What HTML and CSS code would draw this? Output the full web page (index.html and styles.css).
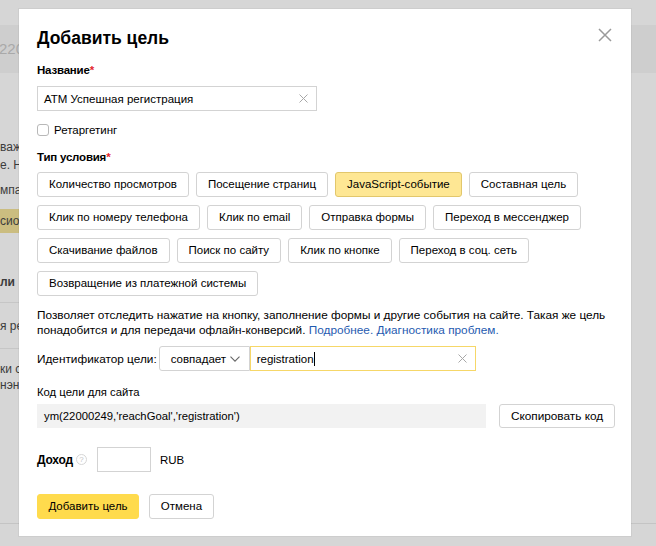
FILE: index.html
```html
<!DOCTYPE html>
<html lang="ru">
<head>
<meta charset="utf-8">
<title>Добавить цель</title>
<link rel="stylesheet" href="styles.css">
</head>
<body>
<div class="backdrop">
  <div class="bd-top"></div>
  <div class="bd-band"><span class="bd-num">220</span></div>
  <div class="bd-left">
    <div class="bd-text">
      <p class="bd-line">важ</p>
      <p class="bd-line">е. Н</p>
      <p class="bd-line bd-l3">мпа</p>
    </div>
    <div class="bd-chip">сион</div>
    <div class="bd-head">ли</div>
    <div class="bd-row">я ре</div>
    <div class="bd-row2"><p>ки с</p><p>нэнт</p></div>
  </div>
  <div class="bd-foot"></div>
</div>

<div class="modal">
  <button class="close" aria-label="Закрыть">
    <svg width="14" height="14" viewBox="0 0 14 14"><path d="M1 1L13 13M13 1L1 13" stroke="#9a9a9a" stroke-width="1.5" fill="none"/></svg>
  </button>
  <h1 class="title">Добавить цель</h1>

  <div class="label">Название<span class="req">*</span></div>
  <div class="input name-input">
    <span class="value">АТМ Успешная регистрация</span>
    <svg class="clear" width="9" height="9" viewBox="0 0 9 9"><path d="M0.5 0.5L8.5 8.5M8.5 0.5L0.5 8.5" stroke="#a8a8a8" stroke-width="1" fill="none"/></svg>
  </div>

  <label class="check"><span class="box"></span>Ретаргетинг</label>

  <div class="label type-label">Тип условия<span class="req">*</span></div>
  <div class="types">
    <span class="chip">Количество просмотров</span>
    <span class="chip">Посещение страниц</span>
    <span class="chip chip-active">JavaScript-событие</span>
    <span class="chip">Составная цель</span>
    <span class="chip">Клик по номеру телефона</span>
    <span class="chip">Клик по email</span>
    <span class="chip">Отправка формы</span>
    <span class="chip">Переход в мессенджер</span>
    <span class="chip">Скачивание файлов</span>
    <span class="chip">Поиск по сайту</span>
    <span class="chip">Клик по кнопке</span>
    <span class="chip">Переход в соц. сеть</span>
    <span class="chip">Возвращение из платежной системы</span>
  </div>

  <div class="desc">
    <div class="desc-line">Позволяет отследить нажатие на кнопку, заполнение формы и другие события на сайте. Такая же цель</div>
    <div class="desc-line"><span>понадобится и для передачи офлайн-конверсий.</span> <a href="#">Подробнее.</a> <a href="#">Диагностика проблем.</a></div>
  </div>

  <div class="ident">
    <span class="ident-label">Идентификатор цели:</span>
    <span class="select">совпадает
      <svg class="chevron" width="10" height="6" viewBox="0 0 10 6"><path d="M0.5 0.7L5 5.2L9.5 0.7" stroke="#666" stroke-width="1.1" fill="none"/></svg>
    </span>
    <span class="input focus-input">
      <span class="value">registration<span class="caret"></span></span>
      <svg class="clear" width="9" height="9" viewBox="0 0 9 9"><path d="M0.5 0.5L8.5 8.5M8.5 0.5L0.5 8.5" stroke="#a8a8a8" stroke-width="1" fill="none"/></svg>
    </span>
  </div>

  <div class="code-label">Код цели для сайта</div>
  <div class="code-row">
    <div class="code">ym(22000249,'reachGoal','registration')</div>
    <span class="btn copy-btn">Скопировать код</span>
  </div>

  <div class="income">
    <span class="income-label">Доход</span>
    <span class="help">?</span>
    <span class="input small-input"></span>
    <span class="currency">RUB</span>
  </div>

  <div class="actions">
    <span class="btn btn-primary">Добавить цель</span>
    <span class="btn btn-cancel">Отмена</span>
  </div>
</div>
</body>
</html>
```

FILE: styles.css
```css
* { box-sizing: border-box; }

html, body {
  margin: 0;
  padding: 0;
}

body {
  width: 656px;
  height: 546px;
  overflow: hidden;
  position: relative;
  background: #d6d6d6;
  font-family: "Liberation Sans", Arial, sans-serif;
  font-size: 11.5px;
  color: #000;
}

/* dimmed page behind the modal */
.backdrop {
  width: 656px;
  color: #3c3c3c;
  font-size: 12px;
}
.bd-top { height: 25px; }
.bd-band {
  height: 48px;
  background: #cecece;
  line-height: 48px;
  font-size: 15px;
  color: #a9a9a9;
  white-space: nowrap;
}
.bd-num { margin-left: -1px; }
.bd-left {
  width: 19px;
  overflow: hidden;
}
.bd-text { padding-top: 65px; }
.bd-line { margin: 0; line-height: 18px; white-space: nowrap; }
.bd-l3 { margin-top: 7px; }
.bd-chip {
  margin-top: 10px;
  height: 24px;
  line-height: 24px;
  background: #cbbd80;
  white-space: nowrap;
}
.bd-head {
  margin-top: 40px;
  line-height: 18px;
  font-weight: bold;
}
.bd-row {
  margin-top: 11px;
  height: 46px;
  line-height: 46px;
  border-top: 1px solid #c6c6c6;
  white-space: nowrap;
}
.bd-row2 {
  border-top: 1px solid #c6c6c6;
  padding-top: 12px;
  height: 175px;
  white-space: nowrap;
}
.bd-row2 p { margin: 0; line-height: 16px; }
.bd-foot { border-top: 1px solid #c4c4c4; }

/* modal */
.modal {
  position: absolute;
  left: 19px;
  top: 9px;
  width: 612px;
  height: 527px;
  background: #fff;
  box-shadow: 0 0 0 1px rgba(0, 0, 0, 0.04);
  padding: 18px 18px 0 18px;
  display: flex;
  flex-direction: column;
  align-items: flex-start;
}

.close {
  position: absolute;
  top: 19px;
  right: 19px;
  width: 14px;
  height: 14px;
  padding: 0;
  border: 0;
  background: none;
  display: flex;
}

.title {
  margin: 0;
  font-size: 17.5px;
  line-height: 22px;
  font-weight: bold;
}

.label {
  margin-top: 13px;
  font-weight: bold;
  line-height: 16px;
  letter-spacing: -0.2px;
}
.req { color: #e3262c; }

.input {
  display: flex;
  align-items: center;
  justify-content: space-between;
  height: 25px;
  border: 1px solid #d3d3d3;
  padding: 0 8px 0 6px;
  background: #fff;
}
.name-input {
  margin-top: 8px;
  width: 280px;
}
.clear { flex: none; }

.check {
  margin-top: 11px;
  display: flex;
  align-items: center;
  line-height: 16px;
}
.box {
  width: 12px;
  height: 12px;
  border: 1px solid #b8b8b8;
  border-radius: 3px;
  margin-right: 5px;
}

.type-label { margin-top: 11px; }

.types {
  margin-top: 7px;
  display: flex;
  flex-wrap: wrap;
  gap: 8px 7px;
  width: 576px;
}
.chip {
  height: 25px;
  line-height: 23px;
  padding: 0 11px;
  border: 1px solid #d3d3d3;
  border-radius: 3px;
  background: #fff;
  white-space: nowrap;
}
.chip-active {
  background: #fee794;
  border-color: #e2c76c;
}

.desc {
  margin-top: 12px;
  font-size: 11.8px;
  width: 576px;
}
.desc-line {
  line-height: 15px;
  white-space: nowrap;
}
.desc a {
  color: #1f5bb0;
  text-decoration: none;
}

.ident {
  margin-top: 8px;
  display: flex;
  align-items: center;
  font-size: 11.8px;
}
.ident-label { margin-right: 2px; }
.select {
  display: flex;
  align-items: center;
  justify-content: space-between;
  height: 25px;
  width: 91px;
  padding: 0 9px 0 11px;
  border: 1px solid #d3d3d3;
  border-radius: 3px 0 0 3px;
  font-size: 11.5px;
}
.chevron { flex: none; }
.focus-input {
  width: 226px;
  border-color: #f6d768;
  padding-left: 6px;
  font-size: 11.5px;
}
.caret {
  display: inline-block;
  width: 1px;
  height: 14px;
  background: #000;
  vertical-align: -3px;
}

.code-label {
  margin-top: 13px;
  line-height: 16px;
  font-size: 11.3px;
}
.code-row {
  margin-top: 4px;
  display: flex;
  gap: 13px;
}
.code {
  width: 449px;
  height: 24px;
  line-height: 24px;
  padding-left: 7px;
  background: #f2f2f2;
  font-size: 11.3px;
}

.btn {
  display: inline-block;
  height: 25px;
  line-height: 23px;
  padding: 0 12px;
  border: 1px solid #d3d3d3;
  border-radius: 3px;
  background: #fff;
  white-space: nowrap;
}
.copy-btn {
  height: 24px;
  line-height: 22px;
  width: 116px;
  text-align: center;
  padding: 0;
  font-size: 11.8px;
}

.income {
  margin-top: 19px;
  display: flex;
  align-items: center;
}
.income-label {
  font-weight: bold;
  font-size: 12px;
  letter-spacing: -0.2px;
}
.help {
  width: 11px;
  height: 11px;
  margin-left: 3px;
  border: 1px solid #d6d6d6;
  border-radius: 50%;
  color: #c4c4c4;
  font-size: 8px;
  line-height: 9px;
  text-align: center;
}
.small-input {
  margin-left: 10px;
  width: 54px;
}
.currency { margin-left: 9px; }

.actions {
  margin-top: 22px;
  display: flex;
  gap: 10px;
}
.btn-primary {
  background: #ffdb4d;
  border-color: #ffdb4d;
  width: 102px;
  padding: 0;
  text-align: center;
}
.btn-cancel {
  width: 65px;
  padding: 0;
  text-align: center;
}
```
